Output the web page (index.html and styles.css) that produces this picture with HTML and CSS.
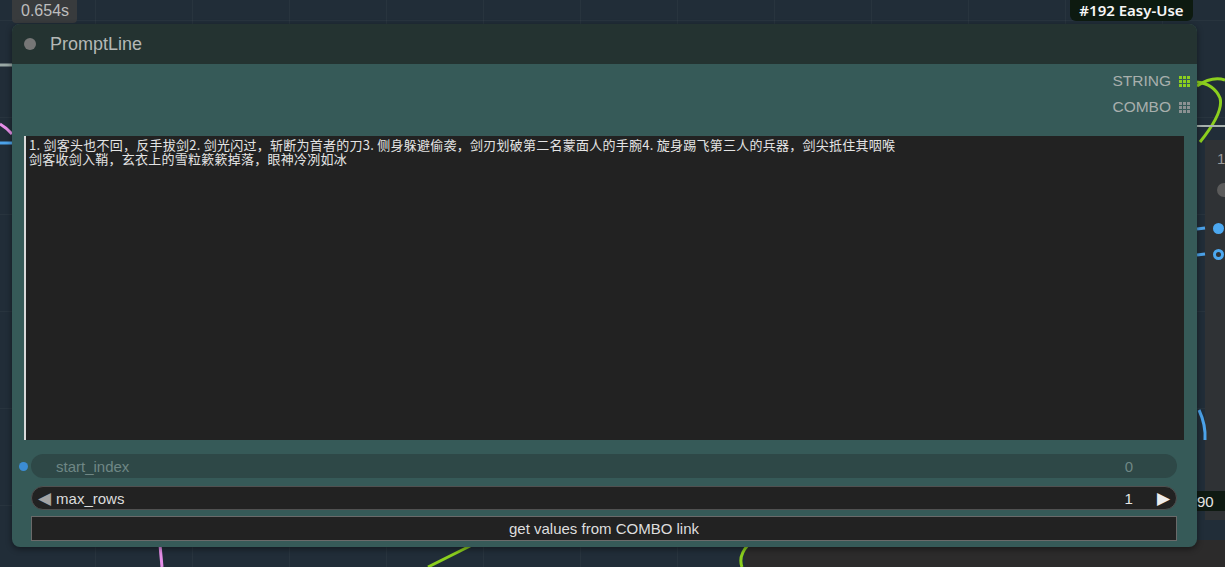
FILE: index.html
```html
<!DOCTYPE html>
<html lang="zh">
<head>
<meta charset="utf-8">
<title>PromptLine</title>
<link rel="stylesheet" href="styles.css">
</head>
<body>
<div class="canvas">
  <div class="grey-node right-node">
    <span class="rn-num">1</span>
    <span class="rn-dot"></span>
    <span class="rn-port filled"></span>
    <span class="rn-port ring"></span>
  </div>
  <div class="grey-node bottom-node"></div>
  <div class="tag-90">90</div>

  <svg class="wires" width="1225" height="567" viewBox="0 0 1225 567">
    <path d="M0 124 Q7 128 12 134" stroke="#e58ee8" stroke-width="3" fill="none"/>
    <path d="M0 143 L12 143" stroke="#4ca3ea" stroke-width="3" fill="none"/>
    <path d="M0 65 L12 65" stroke="#9aa9a6" stroke-width="3" fill="none"/>
    <path d="M1197 82 Q1214 84 1220 98 Q1224 112 1200 142" stroke="#8ccf1e" stroke-width="3" fill="none"/>
    <path d="M1197 86 Q1212 76 1225 80" stroke="#8ccf1e" stroke-width="3" fill="none"/>
    <path d="M1197 126 L1225 126" stroke="#a7b1ad" stroke-width="2" fill="none"/>
    <path d="M1199 410 Q1206 425 1205 440" stroke="#4ca3ea" stroke-width="3" fill="none"/>
    <path d="M1197 229 L1205 228" stroke="#4ca3ea" stroke-width="3" fill="none"/>
    <path d="M1197 255 L1205 254" stroke="#4ca3ea" stroke-width="3" fill="none"/>
    <path d="M160 545 L162 567" stroke="#e58ee8" stroke-width="3" fill="none"/>
    <path d="M472 545 L428 567" stroke="#8ccf1e" stroke-width="3" fill="none"/>
    <path d="M748 545 Q738 556 742 567" stroke="#8ccf1e" stroke-width="3" fill="none"/>
  </svg>

  <div class="time-badge">0.654s</div>
  <div class="id-badge">#192 Easy-Use</div>

  <div class="node">
    <div class="node-title">
      <span class="title-dot"></span>
      <span class="title-text">PromptLine</span>
    </div>
    <div class="node-body">
      <div class="outputs">
        <div class="out-row">
          <span class="out-label">STRING</span>
          <span class="grid-icon green"><i></i><i></i><i></i><i></i><i></i><i></i><i></i><i></i><i></i></span>
        </div>
        <div class="out-row">
          <span class="out-label">COMBO</span>
          <span class="grid-icon grey"><i></i><i></i><i></i><i></i><i></i><i></i><i></i><i></i><i></i></span>
        </div>
      </div>
      <div class="textarea">1. 剑客头也不回，反手拔剑2. 剑光闪过，斩断为首者的刀3. 侧身躲避偷袭，剑刃划破第二名蒙面人的手腕4. 旋身踢飞第三人的兵器，剑尖抵住其咽喉
剑客收剑入鞘，玄衣上的雪粒簌簌掉落，眼神冷冽如冰</div>
      <div class="widgets">
        <div class="widget disabled">
          <span class="input-dot"></span>
          <span class="w-label">start_index</span>
          <span class="w-value">0</span>
        </div>
        <div class="widget number">
          <span class="arrow left">◀</span>
          <span class="w-label">max_rows</span>
          <span class="w-value">1</span>
          <span class="arrow right">▶</span>
        </div>
        <div class="button">get values from COMBO link</div>
      </div>
    </div>
  </div>
</div>
</body>
</html>
```

FILE: styles.css
```css
* { box-sizing: border-box; }
html, body { margin: 0; padding: 0; }
body {
  width: 1225px;
  height: 567px;
  overflow: hidden;
  background: #1f2a34;
  font-family: "Liberation Sans", Arial, sans-serif;
}
.canvas {
  position: relative;
  width: 1225px;
  height: 567px;
  overflow: hidden;
  background-color: #212d38;
  background-image:
    linear-gradient(to right, rgba(255,255,255,0.03) 1px, transparent 1px),
    linear-gradient(to bottom, rgba(255,255,255,0.03) 1px, transparent 1px);
  background-size: 97px 97px, 97px 97px;
  background-position: -2px 20px;
}
.wires { position: absolute; left: 0; top: 0; }

.grey-node {
  position: absolute;
  background: #2d2d2e;
}
.right-node {
  left: 1205px;
  top: 140px;
  width: 40px;
  height: 380px;
  background: #2f3235;
}
.rn-num {
  position: absolute;
  left: 12px;
  top: 10px;
  color: #9a9a9a;
  font-size: 15px;
}
.rn-dot {
  position: absolute;
  left: 12px;
  top: 43px;
  width: 14px;
  height: 14px;
  border-radius: 50%;
  background: #5b5b5b;
}
.rn-port {
  position: absolute;
  left: 8px;
  width: 11px;
  height: 11px;
  border-radius: 50%;
}
.rn-port.filled { top: 83px; background: #4ca8f0; }
.rn-port.ring { top: 109px; border: 3px solid #4ca8f0; background: #2f3235; }
.bottom-node {
  left: 745px;
  top: 540px;
  width: 480px;
  height: 27px;
  background: #2c2b2b;
}
.tag-90 {
  position: absolute;
  left: 1195px;
  top: 491px;
  width: 30px;
  height: 20px;
  background: #0f1a12;
  color: #e8e8e8;
  font-size: 15px;
  line-height: 22px;
  padding-left: 2px;
}

.time-badge {
  position: absolute;
  left: 12px;
  top: 0;
  width: 65px;
  height: 23px;
  background: #383b3d;
  color: #bdbdbd;
  font-size: 16px;
  line-height: 22px;
  padding-left: 9px;
  border-radius: 0 0 4px 4px;
}
.id-badge {
  position: absolute;
  left: 1070px;
  top: 0;
  width: 123px;
  height: 21px;
  text-align: center;
  background: #0d1a10;
  color: #f6f6f6;
  font-family: "Noto Sans", "Liberation Sans", sans-serif;
  font-weight: 600;
  font-size: 15px;
  line-height: 20px;
  border-radius: 0 0 6px 6px;
  z-index: 3;
}

.node {
  position: absolute;
  left: 12px;
  top: 24px;
  width: 1185px;
  height: 523px;
  display: flex;
  flex-direction: column;
  border-radius: 8px;
  background: #365a58;
  box-shadow: 0 2px 6px rgba(0,0,0,0.45);
  z-index: 2;
}
.node-title {
  height: 40px;
  flex: none;
  display: flex;
  align-items: center;
  background: #243331;
  border-radius: 8px 8px 0 0;
  padding-left: 12px;
}
.title-dot {
  width: 12px;
  height: 12px;
  border-radius: 50%;
  background: #767676;
  margin-right: 14px;
}
.title-text {
  color: #b4b8b6;
  font-size: 18px;
  padding-top: 1px;
}
.node-body {
  flex: 1;
  display: flex;
  flex-direction: column;
}
.outputs {
  display: flex;
  flex-direction: column;
  align-items: flex-end;
  padding: 4px 7px 0 0;
  height: 72px;
  flex: none;
}
.out-row {
  height: 26px;
  display: flex;
  align-items: center;
}
.out-label {
  color: #a8afad;
  font-size: 15.5px;
  margin-right: 8px;
}
.grid-icon {
  width: 11px;
  height: 11px;
  display: grid;
  grid-template-columns: repeat(3, 3px);
  grid-template-rows: repeat(3, 3px);
  gap: 1px;
}
.grid-icon i { display: block; width: 3px; height: 3px; }
.grid-icon.green i { background: #8ccf1e; }
.grid-icon.grey i { background: #8b9192; }

.textarea {
  margin: 0 13px 0 12px;
  height: 304px;
  flex: none;
  background: #222222;
  border-left: 2px solid #d9d9d9;
  color: #e4e4e4;
  font-family: "Noto Sans CJK SC", sans-serif;
  font-size: 13px;
  line-height: 14px;
  letter-spacing: 0.25px;
  white-space: pre-wrap;
  padding: 2px 3px;
  overflow: hidden;
}

.widgets {
  display: flex;
  flex-direction: column;
  padding: 14px 20px 0 19px;
}
.widget {
  position: relative;
  height: 24px;
  border-radius: 12px;
  display: flex;
  align-items: center;
  font-size: 15px;
  padding: 0 0 0 25px;
}
.widget.disabled {
  background: #2e4847;
  color: #6f8785;
}
.input-dot {
  position: absolute;
  left: -12px;
  top: 8px;
  width: 9px;
  height: 9px;
  border-radius: 50%;
  background: #3b8cd4;
}
.w-label { flex: 1; }
.widget.disabled .w-value { margin-right: 44px; }
.widget.number {
  margin-top: 8px;
  background: #222222;
  border: 1px solid #505050;
  color: #dcdcdc;
  padding-left: 6px;
}
.arrow {
  color: #a3a3a3;
  font-size: 17px;
  line-height: 1;
  font-family: "DejaVu Sans", sans-serif;
}
.arrow.left { margin-right: 5px; }
.arrow.right { color: #ececec; margin: 0 6px 0 24px; }
.widget.number .w-value { color: #e6e6e6; }
.button {
  margin-top: 6px;
  height: 25px;
  background: #222222;
  border: 1px solid #6a6a6a;
  color: #dedede;
  font-size: 15px;
  display: flex;
  align-items: center;
  justify-content: center;
}
```
